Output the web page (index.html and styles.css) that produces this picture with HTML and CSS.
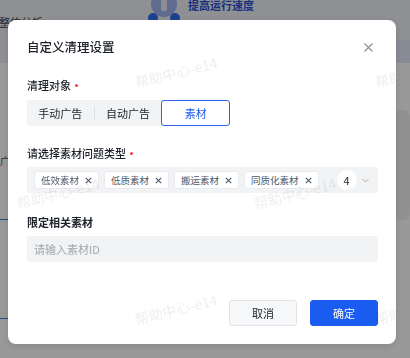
FILE: index.html
```html
<!DOCTYPE html>
<html lang="zh-CN">
<head>
<meta charset="utf-8">
<title>自定义清理设置</title>
<link rel="stylesheet" href="styles.css">
</head>
<body>
<div class="page">
  <div class="page-top">
    <div class="top-left">全整体分析</div>
    <div class="feature">
      <svg class="feature-icon" width="32" height="22" viewBox="0 0 32 22">
        <circle cx="16" cy="4" r="13" fill="#9fb4ee"/>
        <rect x="13" y="-3" width="6" height="14" rx="2" fill="#e9edf7"/>
        <circle cx="5" cy="18" r="5" fill="#2f6ff0"/>
        <circle cx="27" cy="18" r="5" fill="#2f6ff0"/>
      </svg>
      <div class="feature-text">
        <div class="feature-title">提高运行速度</div>
        <div class="feature-desc">减少系统运行压力，提高运行速度</div>
      </div>
    </div>
    <div class="top-accent"></div>
  </div>
  <div class="page-body">
    <div class="side-left">
      <div class="side-text s1">广告</div>
      <div class="side-text s2">全</div>
      <div class="side-line l1"></div>
      <div class="side-text s3">素材</div>
      <div class="side-line l2"></div>
    </div>
    <div class="body-main"></div>
    <div class="side-right"><div class="right-card"></div></div>
  </div>
</div>

<div class="mask">
  <div class="modal">
    <div class="modal-header">
      <div class="modal-title">自定义清理设置</div>
      <button class="close-btn" aria-label="关闭">
        <svg width="9" height="9" viewBox="0 0 9 9"><path d="M0.5 0.5 L8.5 8.5 M8.5 0.5 L0.5 8.5" stroke="#86909c" stroke-width="1.1" fill="none"/></svg>
      </button>
    </div>

    <div class="field-label first">清理对象<span class="req"></span></div>
    <div class="segmented">
      <div class="seg-item">手动广告</div>
      <div class="seg-divider"></div>
      <div class="seg-item">自动广告</div>
      <div class="seg-item active">素材</div>
    </div>

    <div class="field-label">请选择素材问题类型<span class="req"></span></div>
    <div class="tag-select">
      <div class="tags">
        <span class="tag">低效素材<svg class="tag-x" width="7" height="7" viewBox="0 0 7 7"><path d="M0.8 0.8 L6.2 6.2 M6.2 0.8 L0.8 6.2" stroke="#4e5969" stroke-width="1.1"/></svg></span>
        <span class="tag">低质素材<svg class="tag-x" width="7" height="7" viewBox="0 0 7 7"><path d="M0.8 0.8 L6.2 6.2 M6.2 0.8 L0.8 6.2" stroke="#4e5969" stroke-width="1.1"/></svg></span>
        <span class="tag">搬运素材<svg class="tag-x" width="7" height="7" viewBox="0 0 7 7"><path d="M0.8 0.8 L6.2 6.2 M6.2 0.8 L0.8 6.2" stroke="#4e5969" stroke-width="1.1"/></svg></span>
        <span class="tag">同质化素材<svg class="tag-x" width="7" height="7" viewBox="0 0 7 7"><path d="M0.8 0.8 L6.2 6.2 M6.2 0.8 L0.8 6.2" stroke="#4e5969" stroke-width="1.1"/></svg></span>
      </div>
      <span class="count">4</span>
      <svg class="chevron" width="7" height="5" viewBox="0 0 7 5"><path d="M0.5 1 L3.5 4 L6.5 1" stroke="#a9aeb8" stroke-width="1" fill="none"/></svg>
    </div>

    <div class="field-label bold">限定相关素材</div>
    <div class="text-input">请输入素材ID</div>

    <div class="modal-footer">
      <button class="btn btn-cancel">取消</button>
      <button class="btn btn-ok">确定</button>
    </div>

    <div class="wm w1">帮助中心-e14</div>
    <div class="wm w2">帮助中心-e14</div>
    <div class="wm w3">帮助中心-e14</div>
    <div class="wm w4">帮助中心-e14</div>
    <div class="wm w5">帮助中心-e14</div>
    <div class="wm w6">帮助中心-e14</div>
  </div>
</div>
</body>
</html>
```

FILE: styles.css
```css
* { box-sizing: border-box; }
html, body { margin: 0; padding: 0; }
body {
  width: 410px;
  height: 358px;
  overflow: hidden;
  font-family: "Noto Sans CJK SC", "Noto Sans", sans-serif;
  color: #1d2129;
  background: #fff;
}

/* ---------- page behind the mask ---------- */
.page {
  height: 358px;
  display: flex;
  flex-direction: column;
}
.page-top {
  height: 63px;
  flex: none;
  background: #eef0f5;
  display: flex;
  position: relative;
}
.top-left {
  font-size: 11px;
  line-height: 12px;
  color: #444;
  margin-top: 16px;
  margin-left: -12px;
  width: 160px;
  flex: none;
}
.feature {
  display: flex;
  gap: 8px;
}
.feature-title {
  font-size: 11px;
  line-height: 12px;
  font-weight: 700;
  color: #2550d0;
  margin-top: -1px;
}
.feature-desc {
  font-size: 10px;
  line-height: 12px;
  color: #777;
  margin-top: 9px;
}
.top-accent {
  position: absolute;
  right: 0;
  top: 40px;
  width: 20px;
  height: 23px;
  background: #e2e8f8;
}
.page-body {
  flex: 1;
  display: flex;
  background: #fff;
}
.side-left {
  width: 20px;
  flex: none;
  display: flex;
  flex-direction: column;
  align-items: flex-end;
  padding-top: 92px;
}
.side-text { font-size: 10px; line-height: 12px; color: #555; }
.s2 { margin-top: 2px; }
.side-line { width: 20px; height: 1px; background: #4a79f0; }
.l1 { margin-top: 38px; }
.s3 { margin-top: 52px; margin-right: -10px; }
.l2 { margin-top: 34px; }
.body-main { flex: 1; }
.side-right { width: 20px; flex: none; padding-top: 47px; }
.right-card { height: 110px; background: #f2f2f2; border-radius: 6px; margin-left: 4px; }

/* ---------- mask & modal ---------- */
.mask {
  position: fixed;
  inset: 0;
  background: rgba(0, 0, 0, 0.4);
  padding: 20px 0 0 8px;
}
.modal {
  position: relative;
  overflow: hidden;
  width: 388px;
  height: 324px;
  background: #fff;
  border-radius: 8px;
  box-shadow: 0 2px 8px rgba(0,0,0,0.12);
  padding: 18px 18px 18px 19px;
  display: flex;
  flex-direction: column;
}
.modal-header {
  display: flex;
  align-items: center;
  justify-content: space-between;
  height: 18px;
}
.modal-title {
  font-size: 12.5px;
  line-height: 18px;
  font-weight: 500;
  color: #1d2129;
}
.close-btn {
  width: 16px;
  height: 16px;
  border: 0;
  padding: 0;
  background: none;
  display: flex;
  align-items: center;
  justify-content: center;
  margin-right: 2px;
}

.field-label {
  font-size: 11px;
  line-height: 16px;
  font-weight: 500;
  color: #1d2129;
  margin-top: 19px;
  margin-bottom: 6px;
  display: flex;
  align-items: center;
}
.field-label.first { margin-top: 21px; margin-bottom: 7px; }
.field-label.bold { font-weight: 600; margin-top: 21px; }
.req {
  width: 3px;
  height: 3px;
  border-radius: 50%;
  background: #f53f3f;
  margin-left: 4px;
  margin-top: 1px;
}

.segmented {
  width: 203px;
  height: 26px;
  background: #f2f3f5;
  border-radius: 3px;
  display: flex;
  align-items: center;
}
.seg-item {
  flex: 1;
  height: 26px;
  display: flex;
  align-items: center;
  justify-content: center;
  font-size: 11px;
  color: #1d2129;
}
.seg-divider {
  width: 1px;
  height: 12px;
  background: #dcdfe5;
}
.seg-item.active {
  background: #fff;
  border: 1px solid #2f62f2;
  border-radius: 3px;
  color: #1d5cf0;
}

.tag-select {
  height: 26px;
  background: #f2f3f5;
  border-radius: 3px;
  display: flex;
  align-items: center;
  padding: 0 0 0 7px;
}
.tags {
  display: flex;
  gap: 5px;
}
.tag {
  height: 18px;
  background: #fff;
  border: 1px solid #e8eaee;
  border-radius: 3px;
  display: flex;
  align-items: center;
  gap: 6px;
  padding: 0 6px;
  font-size: 9.5px;
  color: #4e5969;
}
.count {
  width: 20px;
  height: 20px;
  border-radius: 50%;
  background: #fff;
  display: flex;
  align-items: center;
  justify-content: center;
  font-size: 11px;
  color: #1d2129;
  margin-left: 18px;
}
.chevron { margin-left: 5px; }

.text-input {
  height: 26px;
  background: #f2f3f5;
  border-radius: 3px;
  padding-left: 7px;
  display: flex;
  align-items: center;
  font-size: 11px;
  color: #a3a6ad;
}

.modal-footer {
  margin-top: auto;
  display: flex;
  justify-content: flex-end;
  gap: 13px;
}
.btn {
  width: 68px;
  height: 26px;
  border-radius: 3px;
  font-family: inherit;
  font-size: 11px;
  padding: 0;
}
.btn-cancel {
  background: #f7f8fa;
  border: 1px solid #e0e2e6;
  color: #1d2129;
}
.btn-ok {
  background: #1a5cf0;
  border: 1px solid #1a5cf0;
  color: #fff;
}

/* ---------- watermarks ---------- */
.wm {
  position: absolute;
  font-size: 14px;
  line-height: 16px;
  white-space: nowrap;
  color: rgba(0, 0, 0, 0.07);
  transform: translate(-50%, -50%) rotate(-14deg);
  pointer-events: none;
}
.w1 { left: 168px; top: 52px; }
.w2 { left: 408px; top: 52px; }
.w3 { left: 50px; top: 173px; }
.w4 { left: 287px; top: 173px; }
.w5 { left: 168px; top: 289px; }
.w6 { left: 408px; top: 289px; }
```
